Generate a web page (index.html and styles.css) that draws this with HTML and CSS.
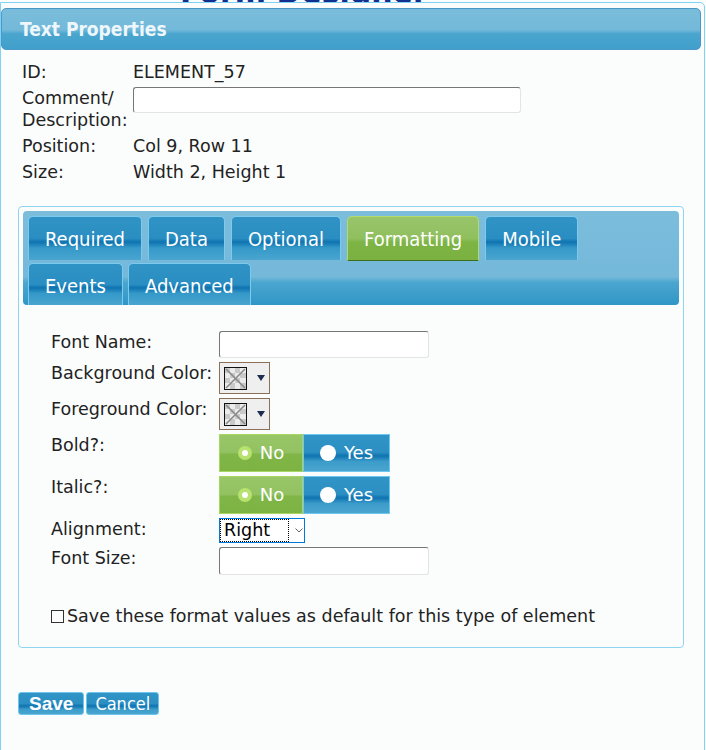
FILE: index.html
```html
<!DOCTYPE html>
<html lang="en">
  <head>
    <meta charset="UTF-8" />
    <meta name="viewport" content="width=device-width, initial-scale=1.0" />
    <title>Text Properties</title>
    <link rel="stylesheet" href="styles.css">
  </head>
  <body>
    <div class="page-title"><span>Form Designer</span></div>

    <div class="dialog">
      <div class="dialog-header">Text Properties</div>

      <div class="dialog-body">
        <table class="info">
          <tr>
            <td class="lbl">ID:</td>
            <td>ELEMENT_57</td>
          </tr>
          <tr>
            <td class="lbl">Comment/ Description:</td>
            <td><input type="text" class="text-in comment" /></td>
          </tr>
          <tr>
            <td class="lbl">Position:</td>
            <td>Col 9, Row 11</td>
          </tr>
          <tr>
            <td class="lbl">Size:</td>
            <td>Width 2, Height 1</td>
          </tr>
        </table>

        <div class="panel">
          <div class="tabs">
            <div class="tab-row">
              <span class="tab">Required</span>
              <span class="tab">Data</span>
              <span class="tab">Optional</span>
              <span class="tab active">Formatting</span>
              <span class="tab">Mobile</span>
            </div>
            <div class="tab-row">
              <span class="tab">Events</span>
              <span class="tab">Advanced</span>
            </div>
          </div>

          <table class="format">
            <tr>
              <td class="lbl">Font Name:</td>
              <td><input type="text" class="text-in short" /></td>
            </tr>
            <tr>
              <td class="lbl">Background Color:</td>
              <td>
                <span class="picker">
                  <svg class="swatch" width="23" height="23" viewBox="0 0 23 23">
                    <rect x="0" y="0" width="23" height="23" fill="#ebebeb" />
                    <rect x="1" y="1" width="5" height="5" fill="#c9c9c9" />
                    <rect x="11" y="1" width="5" height="5" fill="#c9c9c9" />
                    <rect x="6" y="6" width="5" height="5" fill="#c9c9c9" />
                    <rect x="16" y="6" width="6" height="5" fill="#c9c9c9" />
                    <rect x="1" y="11" width="5" height="5" fill="#c9c9c9" />
                    <rect x="11" y="11" width="5" height="5" fill="#c9c9c9" />
                    <rect x="6" y="16" width="5" height="6" fill="#c9c9c9" />
                    <rect x="16" y="16" width="6" height="6" fill="#c9c9c9" />
                    <path d="M2 2 L21 21 M21 2 L2 21" stroke="#8a8a8a" stroke-width="1.6" />
                    <rect x="0.5" y="0.5" width="22" height="22" fill="none" stroke="#111" />
                  </svg>
                  <svg width="8" height="6" viewBox="0 0 8 6"><path d="M0 0 H8 L4 6 Z" fill="#1c2d4d" /></svg>
                </span>
              </td>
            </tr>
            <tr>
              <td class="lbl">Foreground Color:</td>
              <td>
                <span class="picker">
                  <svg class="swatch" width="23" height="23" viewBox="0 0 23 23">
                    <rect x="0" y="0" width="23" height="23" fill="#ebebeb" />
                    <rect x="1" y="1" width="5" height="5" fill="#c9c9c9" />
                    <rect x="11" y="1" width="5" height="5" fill="#c9c9c9" />
                    <rect x="6" y="6" width="5" height="5" fill="#c9c9c9" />
                    <rect x="16" y="6" width="6" height="5" fill="#c9c9c9" />
                    <rect x="1" y="11" width="5" height="5" fill="#c9c9c9" />
                    <rect x="11" y="11" width="5" height="5" fill="#c9c9c9" />
                    <rect x="6" y="16" width="5" height="6" fill="#c9c9c9" />
                    <rect x="16" y="16" width="6" height="6" fill="#c9c9c9" />
                    <path d="M2 2 L21 21 M21 2 L2 21" stroke="#8a8a8a" stroke-width="1.6" />
                    <rect x="0.5" y="0.5" width="22" height="22" fill="none" stroke="#111" />
                  </svg>
                  <svg width="8" height="6" viewBox="0 0 8 6"><path d="M0 0 H8 L4 6 Z" fill="#1c2d4d" /></svg>
                </span>
              </td>
            </tr>
            <tr>
              <td class="lbl">Bold?:</td>
              <td>
                <span class="toggle">
                  <span class="opt on"><span class="dot"></span>No</span>
                  <span class="opt"><span class="dot"></span>Yes</span>
                </span>
              </td>
            </tr>
            <tr>
              <td class="lbl">Italic?:</td>
              <td>
                <span class="toggle">
                  <span class="opt on"><span class="dot"></span>No</span>
                  <span class="opt"><span class="dot"></span>Yes</span>
                </span>
              </td>
            </tr>
            <tr>
              <td class="lbl">Alignment:</td>
              <td>
                <span class="select">
                  <span class="select-value">Right</span>
                  <svg width="8" height="5" viewBox="0 0 8 5"><path d="M0.5 0.5 L4 4 L7.5 0.5" fill="none" stroke="#666" /></svg>
                </span>
              </td>
            </tr>
            <tr>
              <td class="lbl">Font Size:</td>
              <td><input type="text" class="text-in short tall" /></td>
            </tr>
          </table>

          <p class="save-default"><span class="box"></span>Save these format values as default for this type of element</p>
        </div>

        <div class="actions">
          <button class="btn save">Save</button><button class="btn">Cancel</button>
        </div>
      </div>
    </div>
  </body>
</html>
```

FILE: styles.css
```css
body {
  margin: 0;
  padding: 0;
  background: #fbfdfd;
  font-family: "DejaVu Sans", Verdana, sans-serif;
  font-size: 17.5px;
  line-height: 22px;
  color: #222;
}
.page-title {
  height: 2px;
  overflow: hidden;
  display: flex;
  align-items: flex-end;
  padding-left: 180px;
}
.page-title span {
  font-weight: bold;
  font-size: 30px;
  line-height: 18px;
  color: #12308f;
}
.dialog {
  width: 700px;
  border: 1px solid #80d2f2;
  border-radius: 0 5px 0 0;
  padding: 5px 3px 36px 0;
  background: #fbfdfd;
}
.dialog-header {
  height: 40px;
  border: 1px solid #4a97c9;
  border-radius: 5px;
  padding-left: 18px;
  background: linear-gradient(#7abddb 0%, #74b9d9 52%, #4aa5ce 62%, #40a0cb 100%);
  font-family: "DejaVu Sans Condensed", "DejaVu Sans", sans-serif;
  font-weight: bold;
  font-size: 19px;
  line-height: 40px;
  color: #eef7fb;
}
.dialog-body {
  padding-left: 17px;
}
table {
  border-spacing: 0;
}
td {
  padding: 2px;
  vertical-align: top;
}
.info {
  margin: 9px 0 0 0;
}
.info .lbl {
  width: 107px;
  padding-left: 4px;
}
.text-in {
  box-sizing: border-box;
  margin: 0;
  background: #fff;
  border: 1px solid #e4e4e4;
  border-top-color: #767676;
  border-left-color: #767676;
  border-radius: 3px;
  font: inherit;
  vertical-align: top;
}
.comment {
  width: 388px;
  height: 26px;
}
.short {
  width: 210px;
  height: 27px;
}
.short.tall {
  height: 28px;
}
.panel {
  width: 656px;
  margin-top: 21px;
  padding: 4px 4px 20px;
  border: 1px solid #8fd5f2;
  border-radius: 4px;
}
.tabs {
  display: flex;
  flex-direction: column;
  gap: 2px;
  padding: 5px 5px 0;
  border-radius: 4px;
  background: linear-gradient(#7cbddc 0%, #74b8da 70%, #4ba6cf 76%, #3096c6 100%);
}
.tab-row {
  display: flex;
  gap: 6px;
}
.tab-row + .tab-row {
  gap: 5px;
}
.tab {
  height: 41px;
  padding: 0 16px;
  border: 1px solid #7ccaee;
  border-bottom: none;
  border-radius: 5px 5px 0 0;
  background: linear-gradient(#3193c5 0%, #2a8ec2 50%, #0e73b0 58%, #3599c9 72%, #4aa5cf 100%);
  font-family: "DejaVu Sans Condensed", "DejaVu Sans", sans-serif;
  font-size: 20px;
  line-height: 44px;
  color: #fff;
}
.tab-row:first-child .tab {
  height: 43px;
}
.tab.active {
  border-color: #b4da6e;
  border-bottom: 1px solid #3f6d1f;
  height: 42px;
  background: linear-gradient(#99c56b 0%, #90bf5e 50%, #7eb444 58%, #7ab140 100%);
}
.format {
  margin: 24px 0 0 26px;
}
.format .lbl {
  width: 164px;
  white-space: nowrap;
}
.picker {
  display: inline-flex;
  align-items: center;
  gap: 10px;
  box-sizing: border-box;
  height: 32px;
  width: 51px;
  padding: 0 4px;
  border: 1px solid #8c6f57;
  background: #efefef;
  vertical-align: top;
}
.swatch {
  display: block;
}
.toggle {
  display: inline-flex;
  vertical-align: top;
}
.opt {
  display: inline-flex;
  align-items: center;
  justify-content: center;
  gap: 8px;
  box-sizing: border-box;
  width: 87px;
  height: 38px;
  border: 1px solid #6ec7ee;
  background: linear-gradient(#3194c6 0%, #2b8fc3 48%, #0e73b0 58%, #3c9cca 74%, #4aa5cf 100%);
  font-size: 18px;
  color: #fff;
}
.opt .dot {
  width: 16px;
  height: 16px;
  border-radius: 50%;
  background: #fff;
}
.opt.on {
  width: 84px;
  border-color: #a8d65f;
  background: linear-gradient(#98c668 0%, #93c262 48%, #80b647 54%, #7cb343 100%);
}
.opt.on .dot {
  box-sizing: border-box;
  width: 14px;
  height: 14px;
  border: 4px solid #b7e26e;
}
.select {
  display: inline-flex;
  align-items: center;
  gap: 7px;
  box-sizing: border-box;
  width: 86px;
  height: 25px;
  padding: 1px;
  border: 1px solid #0078d7;
  background: #fff;
  vertical-align: top;
  color: #000;
}
.select-value {
  box-sizing: border-box;
  width: 67px;
  height: 21px;
  padding-left: 3px;
  outline: 1px dotted #000;
  line-height: 21px;
}
.save-default {
  display: flex;
  align-items: center;
  gap: 3px;
  margin: 28px 0 0 28px;
}
.box {
  box-sizing: border-box;
  width: 13px;
  height: 13px;
  border: 1px solid #333;
  background: #fff;
}
.actions {
  display: flex;
  gap: 2px;
  margin-top: 44px;
}
.btn {
  box-sizing: border-box;
  height: 23px;
  margin: 0;
  padding: 0 8px;
  border: 1px solid #6ec4ea;
  border-radius: 3px;
  background: linear-gradient(#3194c6 0%, #2b8fc3 50%, #0e73b0 62%, #3c9cca 78%, #4aa5cf 100%);
  font-family: "DejaVu Sans Condensed", "DejaVu Sans", sans-serif;
  font-size: 18px;
  line-height: 21px;
  color: #fff;
}
.btn.save {
  padding: 0 10px;
  font-family: "Liberation Sans", Arial, sans-serif;
  font-weight: bold;
  font-size: 19px;
}
```
